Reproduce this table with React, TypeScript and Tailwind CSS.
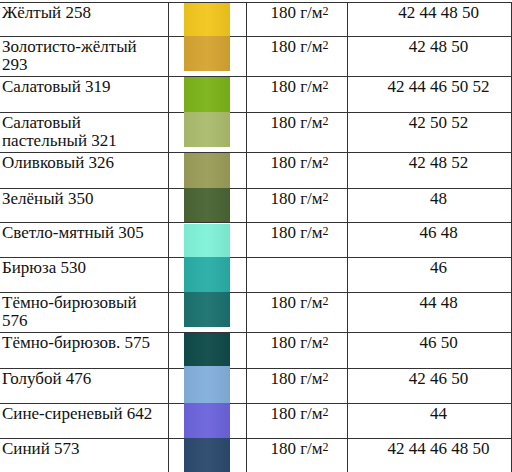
type Row = {
  name: string[]
  color: string
  h: string
  swatch: string
  weight: boolean
  sizes: string
}

const rows: Row[] = [
  { name: ["Жёлтый 258"], color: "#f3c71e", h: "h-[34px]", swatch: "mt-0 h-[33px]", weight: true, sizes: "42 44 48 50" },
  { name: ["Золотисто-жёлтый", "293"], color: "#d6a432", h: "h-[40px]", swatch: "-mt-px h-[35px]", weight: true, sizes: "42 48 50" },
  { name: ["Салатовый 319"], color: "#7cb419", h: "h-[36px]", swatch: "mt-0 h-[35px]", weight: true, sizes: "42 44 46 50 52" },
  { name: ["Салатовый", "пастельный 321"], color: "#abbc6d", h: "h-[40px]", swatch: "-mt-px h-[35px]", weight: true, sizes: "42 50 52" },
  { name: ["Оливковый 326"], color: "#9a9d58", h: "h-[36px]", swatch: "mt-0 h-[35px]", weight: true, sizes: "42 48 52" },
  { name: ["Зелёный 350"], color: "#4a6535", h: "h-[34px]", swatch: "-mt-px h-[34px]", weight: true, sizes: "48" },
  { name: ["Светло-мятный 305"], color: "#80f3d8", h: "h-[35px]", swatch: "mt-px h-[33px]", weight: true, sizes: "46 48" },
  { name: ["Бирюза 530"], color: "#2aaea8", h: "h-[35px]", swatch: "-mt-px h-[35px]", weight: false, sizes: "46" },
  { name: ["Тёмно-бирюзовый", "576"], color: "#1b7270", h: "h-[40px]", swatch: "-mt-px h-[35px]", weight: true, sizes: "44 48" },
  { name: ["Тёмно-бирюзов. 575"], color: "#0f4b49", h: "h-[36px]", swatch: "mt-0 h-[33px]", weight: true, sizes: "46 50" },
  { name: ["Голубой 476"], color: "#84afdd", h: "h-[35px]", swatch: "-mt-[3px] h-[37px]", weight: true, sizes: "42 46 50" },
  { name: ["Сине-сиреневый 642"], color: "#6c64dc", h: "h-[35px]", swatch: "-mt-px h-[35px]", weight: true, sizes: "44" },
  { name: ["Синий 573"], color: "#2c4a6e", h: "h-[40px]", swatch: "-mt-px h-[40px]", weight: true, sizes: "42 44 46 48 50" },
]

function Weight() {
  return (
    <span>
      180 г/м<sup className="text-[12px] top-[-3px]">2</sup>
    </span>
  )
}

export default function App() {
  return (
    <div className="w-[512px] h-[472px] overflow-hidden bg-white text-[#111] text-[17px] leading-[18px] font-['Liberation_Serif']">
      <div className="mt-[2px] border-t border-[#333]">
        {rows.map((r) => (
          <div key={r.name.join(" ")} className={`grid grid-cols-[169px_78px_101px_164px] border-b border-[#333] ${r.h}`}>
            <div className="border-r border-[#333] pl-[2px] pt-px">
              {r.name.map((line) => (
                <div key={line}>{line}</div>
              ))}
            </div>
            <div className="border-r border-[#333] pl-[15px]">
              <div
                className={`relative z-10 w-[46px] ${r.swatch}`}
                style={{
                  backgroundColor: r.color,
                  backgroundImage: "linear-gradient(90deg, rgba(0,0,0,0.04), rgba(255,255,255,0.04) 50%, rgba(0,0,0,0.06))",
                }}
              />
            </div>
            <div className="border-r border-[#333] pl-[5px] pt-px text-center">{r.weight && <Weight />}</div>
            <div className="border-r border-[#333] pl-[18px] pt-px text-center">{r.sizes}</div>
          </div>
        ))}
      </div>
    </div>
  )
}
